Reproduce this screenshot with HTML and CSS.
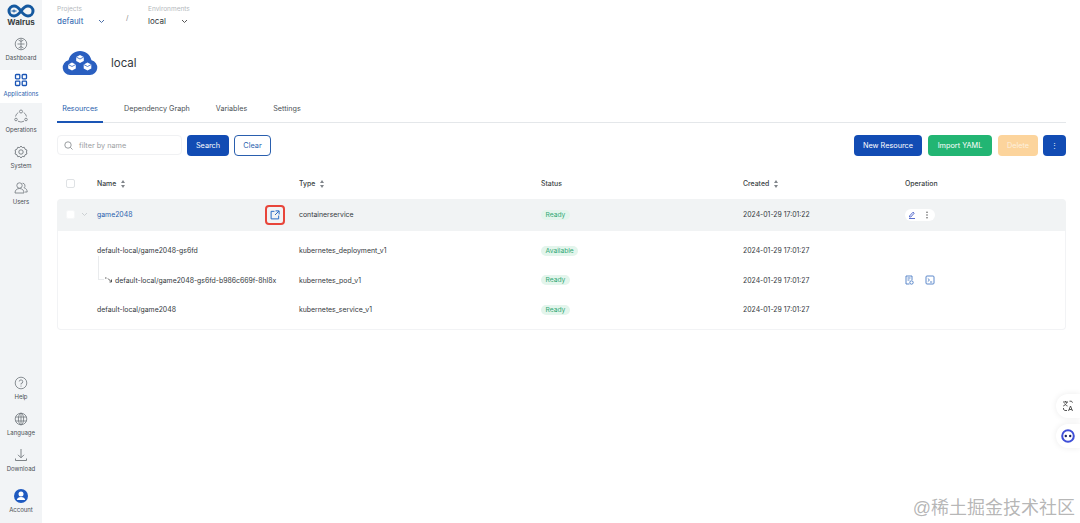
FILE: index.html
```html
<!DOCTYPE html>
<html>

<head>
  <meta charset="utf-8">
  <title>Walrus</title>
  <link rel="stylesheet" href="styles.css">
</head>

<body>
  <div class="app">
    <div class="sidebar">
      <div class="nav-group">
        <div class="logo">
          <svg width="28" height="14" viewBox="0 0 28 14" fill="none">
            <path d="M14 7C11.500 3.500 10 2 7 2a5 5 0 0 0 0 10c3 0 4.500-1.500 7-5zm0 0c2.500-3.500 4-5 7-5a5 5 0 0 1 0 10c-3 0-4.500-1.500-7-5z" stroke="#14589f" stroke-width="3" />
            <path d="M4.500 7h5M7 5.500v3" stroke="#14589f" stroke-width="1" />
          </svg>
          <span class="logo-text">Walrus</span>
        </div>
        <div class="nav-item">
          <svg width="14" height="14" viewBox="0 0 14 14" fill="none" stroke="#70767c" stroke-width="0.800">
            <circle cx="7" cy="7" r="5.800" />
            <path d="M7 1.500v11M7 4.500L4.500 3M7 7H3.500M7 9.500L4.500 11M7 4.500L9.500 3M7 7h3.500M7 9.500l2.500 1.500" />
          </svg>
          <span>Dashboard</span>
        </div>
        <div class="nav-item active">
          <svg width="14" height="14" viewBox="0 0 14 14" fill="none" stroke="#1a55b5" stroke-width="1.300">
            <rect x="1.500" y="1.500" width="4.300" height="4.300" rx="0.800" />
            <rect x="8.200" y="1.500" width="4.300" height="4.300" rx="0.800" />
            <rect x="1.500" y="8.200" width="4.300" height="4.300" rx="0.800" />
            <rect x="8.200" y="8.200" width="4.300" height="4.300" rx="0.800" />
          </svg>
          <span>Applications</span>
        </div>
        <div class="nav-item">
          <svg width="14" height="14" viewBox="0 0 14 14" fill="none" stroke="#70767c" stroke-width="0.800">
            <circle cx="7" cy="2.500" r="1.500" />
            <circle cx="2" cy="10.500" r="1.300" />
            <circle cx="12" cy="10.500" r="1.300" />
            <path d="M4.300 3.500A6 6 0 0 0 1.500 7.500M9.700 3.500a6 6 0 0 1 2.800 4M4 12.200a6 6 0 0 0 6 0" />
          </svg>
          <span>Operations</span>
        </div>
        <div class="nav-item">
          <svg width="14" height="14" viewBox="0 0 14 14" fill="none" stroke="#70767c" stroke-width="0.900">
            <path d="M7 1l1.300 1.600 2-.3.700 1.900 1.900.8-.4 2 .4 2-1.900.8-.7 1.900-2-.3L7 13l-1.300-1.600-2 .3-.7-1.900-1.900-.8.400-2-.4-2 1.900-.8.700-1.900 2 .3z" />
            <circle cx="7" cy="7" r="2.200" />
          </svg>
          <span>System</span>
        </div>
        <div class="nav-item">
          <svg width="14" height="14" viewBox="0 0 14 14" fill="none" stroke="#70767c" stroke-width="0.800">
            <circle cx="5.500" cy="4.500" r="2.700" />
            <path d="M1 12c0-3 2-4.500 4.500-4.500S10 9 10 12zM8.500 2.200a2.500 2.500 0 0 1 1.500 4.500c2 .5 3.200 2.300 3.200 4.300H11" />
          </svg>
          <span>Users</span>
        </div>
      </div>
      <div class="nav-group">
        <div class="nav-item">
          <svg width="14" height="14" viewBox="0 0 14 14" fill="none" stroke="#70767c" stroke-width="0.800">
            <circle cx="7" cy="7" r="5.800" />
            <path d="M5.200 5.500A1.800 1.800 0 1 1 7 7.500v1M7 9.600v1" />
          </svg>
          <span>Help</span>
        </div>
        <div class="nav-item">
          <svg width="14" height="14" viewBox="0 0 14 14" fill="none" stroke="#70767c" stroke-width="0.800">
            <circle cx="7" cy="7" r="5.800" />
            <ellipse cx="7" cy="7" rx="2.600" ry="5.800" />
            <path d="M1.500 5h11M1.500 9h11M7 1.200v11.600" />
          </svg>
          <span>Language</span>
        </div>
        <div class="nav-item">
          <svg width="14" height="14" viewBox="0 0 14 14" fill="none" stroke="#70767c" stroke-width="0.900">
            <path d="M7 1v8.500M4 6.800l3 3 3-3M1.500 10.500v2h11v-2" />
          </svg>
          <span>Download</span>
        </div>
        <div class="nav-item account">
          <svg width="14" height="14" viewBox="0 0 14 14">
            <circle cx="7" cy="7" r="7" fill="#1f5ac0" />
            <circle cx="7" cy="5" r="2.500" fill="#fff" />
            <path d="M2.800 11c.3-2 2-3 4.200-3s3.900 1 4.200 3z" fill="#fff" />
          </svg>
          <span>Account</span>
        </div>
      </div>
    </div>

    <div class="main">
      <div class="crumbs">
        <div class="crumb">
          <div class="crumb-label">Projects</div>
          <div class="crumb-value link">default <svg class="chev" width="7" height="5" viewBox="0 0 7 5" fill="none" stroke="#4a6ea8"><path d="M1 1l2.500 2.500L6 1" /></svg></div>
        </div>
        <div class="crumb-sep">/</div>
        <div class="crumb">
          <div class="crumb-label">Environments</div>
          <div class="crumb-value">local <svg class="chev" width="7" height="5" viewBox="0 0 7 5" fill="none" stroke="#555"><path d="M1 1l2.500 2.500L6 1" /></svg></div>
        </div>
      </div>

      <div class="title-row">
        <svg width="36" height="26" viewBox="0 0 36 26">
          <path d="M8 25a7.500 7.500 0 0 1-1.500-14.800C8 4.500 12.500 1 18 1c5.800 0 10 3.500 11.500 9.200A7.500 7.500 0 0 1 28 25z" fill="#2a5fc0" />
          <path d="M18 5l3.800 2v4L18 13l-3.800-2V7z" fill="#fff" />
          <path d="M10 12.500l3.800 2v4l-3.800 2-3.800-2v-4z" fill="#fff" />
          <path d="M25.500 12.500l3.800 2v4l-3.800 2-3.800-2v-4z" fill="#fff" />
          <path d="M14.200 7L18 9l3.800-2M6.200 14.500l3.800 2 3.800-2M21.700 14.500l3.800 2 3.800-2" fill="none" stroke="#2a5fc0" stroke-width="0.800" />
        </svg>
        <span class="title-text">local</span>
      </div>

      <div class="tabs">
        <div class="tab current">Resources</div>
        <div class="tab">Dependency Graph</div>
        <div class="tab">Variables</div>
        <div class="tab">Settings</div>
      </div>

      <div class="toolbar">
        <div class="search-box">
          <svg width="9" height="9" viewBox="0 0 9 9" fill="none" stroke="#808589" stroke-width="0.800">
            <circle cx="4" cy="4" r="3.200" />
            <path d="M6.400 6.400L8.500 8.500" />
          </svg>
          <span>filter by name</span>
        </div>
        <button class="btn primary search-btn">Search</button>
        <button class="btn outline clear-btn">Clear</button>
        <div class="spacer"></div>
        <button class="btn primary new-btn">New Resource</button>
        <button class="btn green import-btn">Import YAML</button>
        <button class="btn orange delete-btn">Delete</button>
        <button class="btn primary more-btn">⋮</button>
      </div>

      <div class="table">
        <div class="row head">
          <div class="check-cell"><span class="checkbox"></span></div>
          <div class="head-cell">Name <span class="sort"></span></div>
          <div class="head-cell">Type <span class="sort"></span></div>
          <div>Status</div>
          <div class="head-cell">Created <span class="sort"></span></div>
          <div>Operation</div>
        </div>

        <div class="row parent">
          <div class="check-cell">
            <span class="checkbox blank"></span>
            <svg width="7" height="5" viewBox="0 0 7 5" fill="none" stroke="#c4c8cc" stroke-width="0.800"><path d="M1 1l2.500 2.500L6 1" /></svg>
          </div>
          <div class="name-cell">
            <span class="link">game2048</span>
            <span class="open-link">
              <svg width="10" height="10" viewBox="0 0 9 9" fill="none" stroke="#2a6cc4" stroke-width="0.900">
                <path d="M4 1.200H1v6.800h6.800V5M5 .8h3.200V4M8 1L4.500 4.500" />
              </svg>
            </span>
          </div>
          <div>containerservice</div>
          <div><span class="tag">Ready</span></div>
          <div>2024-01-29 17:01:22</div>
          <div>
            <span class="op-pill">
              <svg width="8" height="8" viewBox="0 0 8 8" fill="none" stroke="#4a5fc8" stroke-width="0.900"><path d="M1.500 5l3.500-3.800 1.200 1L2.800 6H1.500zM1 7.500h6" /></svg>
              <svg width="8" height="8" viewBox="0 0 8 8" fill="#444"><circle cx="4" cy="1.300" r=".7" /><circle cx="4" cy="4" r=".7" /><circle cx="4" cy="6.700" r=".7" /></svg>
            </span>
          </div>
        </div>

        <div class="children">
          <div class="row child">
            <div></div>
            <div>default-local/game2048-gs6fd</div>
            <div>kubernetes_deployment_v1</div>
            <div><span class="tag">Available</span></div>
            <div>2024-01-29 17:01:27</div>
            <div></div>
          </div>
          <div class="row child">
            <div></div>
            <div class="pod-name">
              <span class="tree-line"></span>
              <svg width="8" height="6" viewBox="0 0 8 6" fill="none" stroke="#444" stroke-width="0.900"><path d="M0 1h1.500M3 1.500L6 4.500M6.500 2.500v2.500H4.500" /></svg>
              <span>default-local/game2048-gs6fd-b986c669f-8hl8x</span>
            </div>
            <div>kubernetes_pod_v1</div>
            <div><span class="tag">Ready</span></div>
            <div>2024-01-29 17:01:27</div>
            <div class="op-icons">
              <svg width="9" height="10" viewBox="0 0 9 10" fill="none" stroke="#4a7cc4" stroke-width="0.900">
                <path d="M1 1h6v4M1 1v8h3.500M2.500 3h3M2.500 5h2" />
                <circle cx="6.500" cy="7.500" r="1.700" />
              </svg>
              <svg width="10" height="10" viewBox="0 0 10 10" fill="none" stroke="#4a7cc4" stroke-width="0.900">
                <rect x="1" y="1" width="8" height="8" rx="1" />
                <path d="M2.800 3.500L4.500 5 2.800 6.500M5 7h2.200" />
              </svg>
            </div>
          </div>
          <div class="row child">
            <div></div>
            <div>default-local/game2048</div>
            <div>kubernetes_service_v1</div>
            <div><span class="tag">Ready</span></div>
            <div>2024-01-29 17:01:27</div>
            <div></div>
          </div>
        </div>
      </div>
    </div>
  </div>

  <div class="float-btn translate">
    <svg width="12" height="12" viewBox="0 0 12 12" fill="none" stroke="#444" stroke-width="0.900">
      <path d="M1 2h5M3.500 1v1M5 2C4.500 4 3 5.500 1.200 6M2.500 3.500C3 4.500 4 5.500 5.500 6M7.500 1.200h2l1 1.500M1.500 8v1.500l1.500 1h2M6.500 11l2-5 2 5M7.200 9.500h2.600" />
    </svg>
  </div>
  <div class="float-btn robot">
    <svg width="14" height="14" viewBox="0 0 14 14">
      <circle cx="7" cy="7" r="5.800" fill="#fff" stroke="#3f4fd8" stroke-width="2" />
      <circle cx="4.800" cy="7" r="1.200" fill="#1a2358" />
      <circle cx="9.200" cy="7" r="1.200" fill="#1a2358" />
    </svg>
  </div>
  <div class="watermark">@稀土掘金技术社区</div>
</body>

</html>
```

FILE: styles.css
```css
body {
  margin: 0;
  padding: 0;
  overflow: hidden;
  background-color: white;
  font-family: Inter, "Liberation Sans", sans-serif;
  font-size: 7px;
  color: #33383d;
}

svg {
  display: block;
  flex: none;
}

.app {
  display: flex;
  height: 523px;
}

.link {
  color: #2a5fae;
}

/* left nav */

.sidebar {
  width: 42px;
  flex: none;
  background-color: #f2f4f6;
  display: flex;
  flex-direction: column;
  justify-content: space-between;
}

.logo {
  height: 31px;
  display: flex;
  flex-direction: column;
  align-items: center;
  padding-top: 4px;
  box-sizing: border-box;
}

.logo-text {
  font-size: 8px;
  font-weight: 700;
  line-height: 9px;
  margin-top: 0;
  color: #3a3f44;
}

.nav-item {
  height: 36px;
  display: flex;
  flex-direction: column;
  align-items: center;
  justify-content: center;
  gap: 3px;
  font-size: 6px;
  line-height: 7px;
  color: #4a4f54;
  white-space: nowrap;
}

.nav-item.active {
  background: linear-gradient(#f2f4f6 3px, white 3px);
  color: #2a5fae;
}

.nav-item.account {
  height: 36px;
  margin-top: 5px;
  margin-bottom: 4px;
}

/* main column */

.main {
  flex: 1;
  min-width: 0;
  padding: 0 14px 0 15px;
}

.crumbs {
  display: flex;
  align-items: flex-start;
  height: 50px;
  padding-top: 5px;
  box-sizing: border-box;
}

.crumb-label {
  font-size: 6.500px;
  line-height: 8px;
  color: #b4b8bc;
}

.crumb-value {
  display: flex;
  align-items: center;
  font-size: 8px;
  line-height: 12px;
  margin-top: 2px;
}

.chev {
  margin-left: 15px;
}

.crumb:first-child {
  width: 69px;
}

.crumb-sep {
  width: 22px;
  margin-top: 8px;
  color: #888;
}

.title-row {
  display: flex;
  align-items: center;
  height: 26px;
  padding-left: 5px;
  gap: 13px;
}

.title-text {
  font-size: 11.500px;
  color: #33383d;
}

.tabs {
  display: flex;
  margin-top: 20px;
  height: 26px;
  border-bottom: 1px solid #e4e7ea;
}

.tab {
  margin-right: 26px;
  line-height: 25px;
  font-size: 7.200px;
  color: #4a4f54;
}

.tab.current {
  color: #2a5fae;
  width: 46px;
  height: 27px;
  box-sizing: border-box;
  margin-right: 21px;
  text-align: center;
  border-bottom: 2px solid #1a55b5;
}

.toolbar {
  display: flex;
  align-items: flex-start;
  margin-top: 12px;
  height: 21px;
}

.search-box {
  width: 125px;
  height: 20px;
  box-sizing: border-box;
  border: 1px solid #f0f1f3;
  border-radius: 4px;
  display: flex;
  align-items: center;
  gap: 6px;
  padding-left: 6px;
  color: #9a9ea2;
  font-size: 7.300px;
}

.btn {
  height: 21px;
  padding: 0;
  border-radius: 4px;
  border: none;
  font-family: inherit;
  font-size: 7.300px;
  color: white;
}

.primary {
  background-color: #124cb4;
}

.outline {
  background-color: white;
  border: 1px solid #2a5fae;
  color: #2a5fae;
}

.green {
  background-color: #22b573;
}

.orange {
  background-color: #fcd49c;
  color: #fdf0dc;
}

.search-btn {
  width: 42px;
  margin-left: 5px;
}

.clear-btn {
  width: 37px;
  margin-left: 5px;
}

.spacer {
  flex: 1;
}

.new-btn {
  width: 68px;
}

.import-btn {
  width: 64px;
  margin-left: 6px;
}

.delete-btn {
  width: 40px;
  margin-left: 6px;
}

.more-btn {
  width: 23px;
  margin-left: 5px;
}

/* table */

.table {
  margin-top: 14px;
}

.row {
  display: grid;
  grid-template-columns: 40px 202px 242px 202px 162px 1fr;
  align-items: center;
  font-size: 6.900px;
}

.head {
  height: 27px;
  margin-bottom: 2px;
  color: #3a3f44;
  font-weight: 500;
}

.head-cell {
  display: flex;
  align-items: center;
  gap: 5px;
}

.check-cell {
  display: flex;
  align-items: center;
  padding-left: 9px;
  gap: 6px;
}

.checkbox {
  width: 7px;
  height: 7px;
  border: 1px solid #dfe2e5;
  border-radius: 2px;
  background-color: white;
}

.checkbox.blank {
  border-color: #f6f7f8;
}

.sort {
  display: flex;
  flex-direction: column;
  gap: 2px;
}

.sort::before,
.sort::after {
  content: "";
  border-left: 2.500px solid transparent;
  border-right: 2.500px solid transparent;
}

.sort::before {
  border-bottom: 3px solid #80858a;
}

.sort::after {
  border-top: 3px solid #80858a;
}

.parent {
  height: 32px;
  box-sizing: border-box;
  padding-bottom: 1px;
  background-color: #f1f3f4;
  border-radius: 4px 4px 0 0;
}

.name-cell {
  display: flex;
  align-items: center;
  justify-content: space-between;
  padding-right: 14px;
}

.open-link {
  width: 20px;
  height: 20px;
  border: 2px solid #e8453a;
  border-radius: 4px;
  box-sizing: border-box;
  display: flex;
  align-items: center;
  justify-content: center;
}

.tag {
  display: inline-block;
  background-color: #e3f5ec;
  color: #2fa874;
  font-size: 6.700px;
  line-height: 10px;
  padding: 0 4.500px;
  border-radius: 5px;
}

.op-pill {
  display: inline-flex;
  align-items: center;
  gap: 7px;
  background-color: white;
  border-radius: 6px;
  padding: 2px 4px 2px 3px;
}

.children {
  border: 1px solid #f2f3f5;
  border-top: none;
  height: 99px;
  box-sizing: border-box;
  border-radius: 0 0 4px 4px;
  padding-top: 5px;
}

.child {
  height: 29.500px;
  margin-left: -1px;
}

.pod-name {
  position: relative;
  display: flex;
  align-items: center;
  gap: 2px;
  padding-left: 8px;
  white-space: nowrap;
}

.tree-line {
  position: absolute;
  left: 1px;
  top: -20px;
  width: 5px;
  height: 23px;
  border-left: 1px solid #e9ebed;
  border-bottom: 1px solid #e9ebed;
}

.op-icons {
  display: flex;
  gap: 11px;
}

/* things floating over the page */

.float-btn {
  position: absolute;
  right: 0;
  width: 24px;
  height: 24px;
  border-radius: 12px 0 0 12px;
  background-color: white;
  box-shadow: 0 0 6px rgba(0, 0, 0, 0.08);
  display: flex;
  align-items: center;
  justify-content: center;
}

.translate {
  top: 394px;
}

.robot {
  top: 424px;
}

.watermark {
  position: absolute;
  right: 5px;
  top: 496px;
  font-family: "Liberation Sans", "Noto Sans CJK SC", sans-serif;
  font-size: 18px;
  line-height: 24px;
  color: rgba(120, 120, 120, 0.55);
  white-space: nowrap;
}
```
